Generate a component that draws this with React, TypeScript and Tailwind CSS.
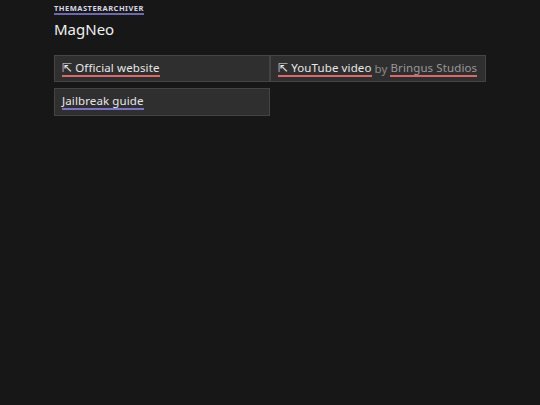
import React from "react";

export default function App() {
  const font = { fontFamily: '"Noto Sans", "Open Sans", sans-serif' };
  return (
    <div className="min-h-[405px] w-full bg-[#171717] text-[#e8e8e8]" style={font}>
      <div className="pl-[54px] pt-[4px] flex flex-col items-start">
        <a className="block w-fit text-[7.5px] font-bold tracking-[0.065em] uppercase leading-[9px] text-[#d8d8e8] border-b-2 border-[#6e68b0]">
          themasterarchiver
        </a>
        <h1 className="mt-[4px] text-[15px] leading-[20px] text-[#f0f0f0]">MagNeo</h1>
        <div className="mt-[16px] grid grid-cols-[216px_216px] gap-y-[6px] text-[11.5px] tracking-[0.01em] whitespace-nowrap">
          <div className="h-[27px] bg-[#2f2f2f] border border-[#444] px-[7px] flex items-center">
            <a className="border-b-2 border-[#d86a6a] leading-[14px]">⇱ Official website</a>
          </div>
          <div className="h-[27px] bg-[#2f2f2f] border border-[#444] px-[7px] flex items-center">
            <a className="border-b-2 border-[#d86a6a] leading-[14px]">⇱ YouTube video</a>
            <span className="text-[#8a8a8a] mx-[3px] leading-[14px]">by</span>
            <a className="border-b-2 border-[#d86a6a] leading-[14px] text-[#9a9a9a]">Bringus Studios</a>
          </div>
          <div className="h-[28px] bg-[#2f2f2f] border border-[#444] px-[7px] flex items-center">
            <a className="border-b-2 border-[#7a72c8] leading-[14px]">Jailbreak guide</a>
          </div>
        </div>
      </div>
    </div>
  );
}
